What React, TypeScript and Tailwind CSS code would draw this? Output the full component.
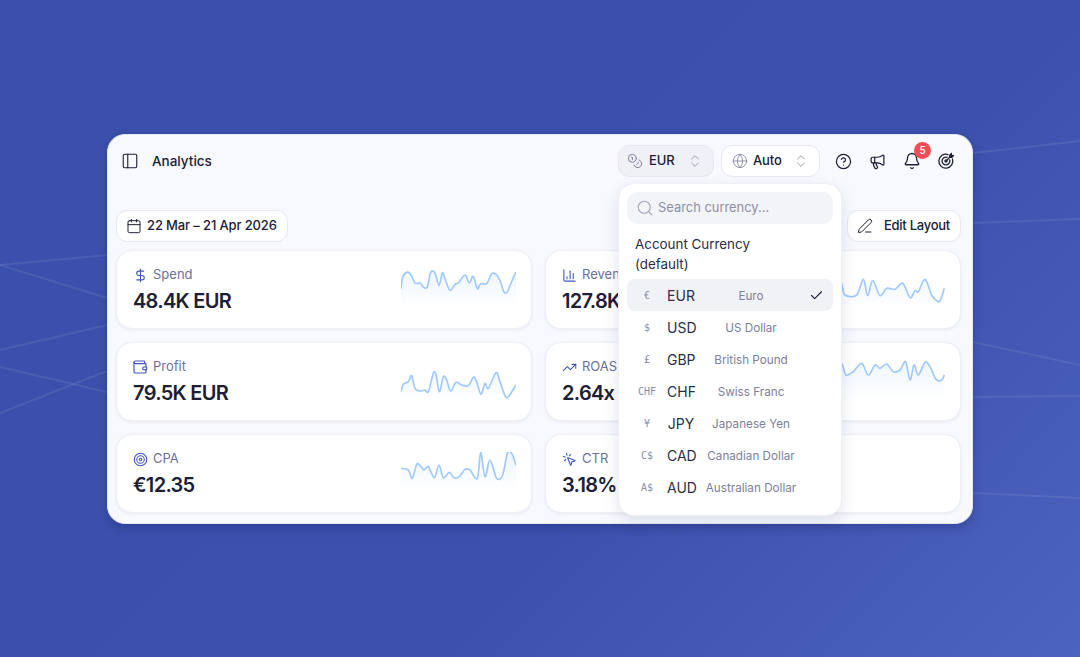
import { Calendar, Check, ChevronsUpDown, CircleHelp, DollarSign, Bell, Coins, Globe, Megaphone, MousePointerClick, PanelLeft, PenLine, Search, Target, TrendingUp, Wallet, BarChart3 } from "lucide-react";
import type { ReactNode } from "react";

type Pt = [number, number];

// smooth line through the points (catmull-rom to bezier)
function smooth(pts: Pt[]) {
  let d = `M${pts[0][0]} ${pts[0][1]}`;
  for (let i = 0; i < pts.length - 1; i++) {
    const p0 = pts[Math.max(i - 1, 0)];
    const p1 = pts[i];
    const p2 = pts[i + 1];
    const p3 = pts[Math.min(i + 2, pts.length - 1)];
    const c1x = p1[0] + (p2[0] - p0[0]) / 6;
    const c1y = p1[1] + (p2[1] - p0[1]) / 6;
    const c2x = p2[0] - (p3[0] - p1[0]) / 6;
    const c2y = p2[1] - (p3[1] - p1[1]) / 6;
    d += ` C${c1x.toFixed(1)} ${c1y.toFixed(1)} ${c2x.toFixed(1)} ${c2y.toFixed(1)} ${p2[0]} ${p2[1]}`;
  }
  return d;
}

const shift = (pts: Pt[], dy: number): Pt[] => pts.map(([x, y]) => [x, y + dy]);

// all points are in 3x zoom coordinates, relative to the top left of the chart
const spend: Pt[] = shift([[0,50],[5,15],[17,1],[29,7],[42,33],[57,33],[67,45],[79,45],[89,1],[102,3],[114,40],[124,3],[132,20],[147,55],[162,37],[172,33],[187,13],[195,11],[205,33],[217,13],[229,50],[239,35],[257,35],[272,5],[285,7],[297,25],[309,60],[319,60],[329,35],[345,0]], 12);
const revenue: Pt[] = [[0,40],[20,30],[35,46],[45,81],[80,81],[100,34],[113,83],[128,38],[150,83],[170,61],[195,64],[218,46],[240,89],[255,68],[265,71],[285,34],[305,81],[320,98],[330,98],[343,61]];
const profit: Pt[] = shift([[0,57],[7,35],[22,27],[32,9],[42,47],[57,55],[72,52],[82,57],[97,2],[105,5],[115,57],[127,12],[137,22],[149,55],[165,29],[182,37],[202,39],[217,14],[227,27],[240,65],[252,32],[262,47],[285,0],[297,27],[312,69],[322,72],[345,37]], 38);
const roas: Pt[] = [[0,40],[20,25],[35,10],[48,45],[70,35],[95,10],[115,45],[135,15],[150,25],[170,12],[190,35],[210,30],[227,5],[240,60],[252,15],[265,45],[285,7],[300,20],[318,58],[335,60],[343,45]];
const cpa: Pt[] = shift([[0,47],[22,52],[34,77],[47,35],[57,39],[69,52],[82,42],[100,75],[114,37],[127,75],[145,59],[159,75],[175,72],[192,50],[207,52],[229,77],[239,0],[252,72],[267,22],[287,77],[305,67],[319,2],[332,2],[345,37]], 2);

function Sparkline({ id, pts }: { id: string; pts: Pt[] }) {
  const line = smooth(pts);
  return (
    <svg width="115" height="40" viewBox="0 0 345 120" fill="none" className="shrink-0">
      <defs>
        <linearGradient id={id} x1="0" y1="0" x2="0" y2="1">
          <stop offset="0" stopColor="#93c5fd" stopOpacity="0.16" />
          <stop offset="1" stopColor="#93c5fd" stopOpacity="0" />
        </linearGradient>
      </defs>
      <path d={`${line} L345 120 L0 120 Z`} fill={`url(#${id})`} />
      <path d={line} stroke="#a0c9fd" strokeWidth="5" />
    </svg>
  );
}

function StatCard({ icon, label, value, children }: { icon: ReactNode; label: string; value: string; children?: ReactNode }) {
  return (
    <div className="h-[79px] flex items-start justify-between rounded-[16px] bg-white border border-[#eef0f6] shadow-[0_1px_3px_rgba(30,41,90,0.08)] pl-4 pr-[15px] pt-[14px]">
      <div>
        <div className="flex items-center gap-[5px] -ml-[1px] h-[20px] text-[13px] text-[#6b7194]">
          <span className="w-[16px] flex items-center justify-center text-[#4058b8]">{icon}</span>
          {label}
        </div>
        <div className="mt-[2px] text-[20px] leading-[28px] font-semibold tracking-[-0.035em] text-[#1d2035]">{value}</div>
      </div>
      <div className="pt-[3px]">{children}</div>
    </div>
  );
}

const currencies = [
  ["€", "EUR", "Euro"],
  ["$", "USD", "US Dollar"],
  ["£", "GBP", "British Pound"],
  ["CHF", "CHF", "Swiss Franc"],
  ["¥", "JPY", "Japanese Yen"],
  ["C$", "CAD", "Canadian Dollar"],
  ["A$", "AUD", "Australian Dollar"],
];

function CurrencyMenu() {
  return (
    <div className="absolute left-[510px] top-[48px] w-[224px] h-[333px] rounded-[16px] bg-white border border-[#eef0f6] shadow-[0_6px_16px_rgba(30,41,90,0.12)] p-2">
      <div className="flex items-center gap-[4px] h-[32px] rounded-[10px] bg-[#f3f4f8] pl-[9px] text-[12.9px] text-[#8d90a6]">
        <Search className="w-[18px] h-[18px] text-[#a5a8b8]" strokeWidth={1.5} />
        Search currency...
      </div>
      <div className="px-2 pt-[10px] pb-[5px] text-[13.4px] leading-[20px] text-[#2b2e45]">
        Account Currency
        <br />
        (default)
      </div>
      {currencies.map(([sym, code, name], i) => (
        <div key={code} className={`flex items-center h-[32px] rounded-[8px] ${i === 0 ? "bg-[#f1f2f6]" : ""}`}>
          <span className="w-[40px] text-center text-[10px] text-[#8a8da6] font-medium" style={{ fontFamily: "'DejaVu Sans Mono', monospace" }}>{sym}</span>
          <span className="w-[28px] text-center text-[14px] text-[#2b2e45]">{code}</span>
          <span className="w-[112px] pt-[4px] text-center text-[11.7px] text-[#7d8099]">{name}</span>
          {i === 0 && <Check className="ml-[2px] w-[15px] h-[15px] text-[#1d2035]" strokeWidth={1.75} />}
        </div>
      ))}
    </div>
  );
}

// target with an arrow going out at the top right
function TargetArrow() {
  return (
    <svg width="18" height="18" viewBox="0 0 24 24" fill="none" stroke="#1d2035" strokeWidth="1.75" strokeLinecap="round" strokeLinejoin="round" className="ml-[16px]">
      <path d="M20.6 9.3a9.3 9.3 0 1 1-5.9-5.9" />
      <path d="M16.9 10.6a5.2 5.2 0 1 1-3.5-3.5" />
      <circle cx="12" cy="12" r="1.4" />
      <path d="M12 12l6-6" />
      <path d="M17 4.2V7h2.8l2.2-2.2h-2.8V2z" fill="#1d2035" />
    </svg>
  );
}

export default function App() {
  return (
    <div className="relative w-[1080px] h-[657px] overflow-hidden bg-[linear-gradient(135deg,#3b50ac_0%,#3c51ad_62%,#4d63c0_100%)] flex items-start justify-center pt-[134px]" style={{ fontFamily: "Inter, sans-serif" }}>
      {/* faint lines behind the window */}
      <svg className="absolute inset-0" width="1080" height="657" fill="none" stroke="#ffffff" strokeOpacity="0.08" strokeWidth="2">
        <path d="M0 265 L107 255" />
        <path d="M0 265 L107 298" />
        <path d="M0 350 L107 325" />
        <path d="M0 367 L107 392" />
        <path d="M0 413 L107 371" />
        <path d="M973 153 L1080 141" />
        <path d="M973 223 L1080 219" />
        <path d="M973 342 L1080 365" />
        <path d="M973 397 L1080 396" />
        <path d="M973 493 L1080 498" />
      </svg>

      <div className="relative w-[866px] h-[390px] rounded-[18px] bg-[#f8f9fe] border border-[#e4e6f0] shadow-[0_4px_10px_rgba(20,30,90,0.3)] pl-2 pr-[11px]">
        <header className="flex items-center h-[52px] pl-[5px] pr-[6px]">
          <PanelLeft className="w-[18px] h-[18px] text-[#1d2035]" strokeWidth={1.5} />
          <span className="ml-[13px] text-[13.5px] font-medium text-[#1d2035]">Analytics</span>
          <div className="ml-auto flex items-center">
            <button className="flex items-center w-[96px] h-[32px] rounded-[11px] bg-[#f0f1f6] border border-[#e7e9f1] pl-[8px] pr-[10px] text-[13px] tracking-[-0.01em] font-medium text-[#1d2035]">
              <Coins className="w-[16px] h-[16px] text-[#7d8099]" strokeWidth={1.5} />
              <span className="ml-[6px]">EUR</span>
              <ChevronsUpDown className="ml-auto w-[16px] h-[16px] text-[#8f92a8]" strokeWidth={1.35} />
            </button>
            <button className="ml-[7px] flex items-center w-[99px] h-[32px] rounded-[11px] bg-white border border-[#e7e9f1] pl-[10px] pr-[10px] text-[13px] tracking-[-0.01em] font-medium text-[#1d2035]">
              <Globe className="w-[16px] h-[16px] text-[#7d8099]" strokeWidth={1.25} />
              <span className="ml-[5px]">Auto</span>
              <ChevronsUpDown className="ml-auto w-[16px] h-[16px] text-[#8f92a8]" strokeWidth={1.35} />
            </button>
            <CircleHelp className="ml-[15px] w-[17px] h-[17px] text-[#1d2035]" strokeWidth={1.75} />
            <Megaphone className="ml-[17px] w-[17px] h-[17px] text-[#1d2035]" strokeWidth={1.75} />
            <div className="relative ml-[17px]">
              <Bell className="w-[18px] h-[18px] text-[#1d2035]" strokeWidth={1.75} />
              <span className="absolute -top-[10px] left-[11px] w-[17px] h-[17px] rounded-full bg-[#f24d57] text-white text-[10px] font-medium flex items-center justify-center">5</span>
            </div>
            <TargetArrow />
          </div>
        </header>

        <div className="flex justify-between mt-[23px]">
          <button className="flex items-center gap-[5px] h-[32px] rounded-[11px] bg-white border border-[#e7e9f1] pl-[9px] pr-[10px] text-[13px] tracking-[-0.01em] font-medium text-[#1d2035]">
            <Calendar className="w-[16px] h-[16px]" strokeWidth={1.5} />
            22 Mar – 21 Apr 2026
          </button>
          <button className="flex items-center gap-[11px] h-[32px] rounded-[11px] bg-white border border-[#e7e9f1] pl-[9px] pr-[10px] text-[13px] tracking-[-0.02em] font-medium text-[#1d2035]">
            <PenLine className="w-[16px] h-[16px]" strokeWidth={1.5} />
            Edit Layout
          </button>
        </div>

        <div className="grid grid-cols-2 gap-x-[13px] gap-y-[13px] mt-[8px]">
          <StatCard icon={<DollarSign className="w-[15px] h-[15px]" strokeWidth={1.75} />} label="Spend" value="48.4K EUR">
            <Sparkline id="s1" pts={spend} />
          </StatCard>
          <StatCard icon={<BarChart3 className="w-[15px] h-[15px]" strokeWidth={1.75} />} label="Revenue" value="127.8K EUR">
            <Sparkline id="s2" pts={revenue} />
          </StatCard>
          <StatCard icon={<Wallet className="w-[16px] h-[16px]" strokeWidth={1.75} />} label="Profit" value="79.5K EUR">
            <Sparkline id="s3" pts={profit} />
          </StatCard>
          <StatCard icon={<TrendingUp className="w-[15px] h-[15px]" strokeWidth={1.75} />} label="ROAS" value="2.64x">
            <Sparkline id="s4" pts={roas} />
          </StatCard>
          <StatCard icon={<Target className="w-[15px] h-[15px]" strokeWidth={1.75} />} label="CPA" value="€12.35">
            <Sparkline id="s5" pts={cpa} />
          </StatCard>
          <StatCard icon={<MousePointerClick className="w-[15px] h-[15px]" strokeWidth={1.75} />} label="CTR" value="3.18%" />
        </div>

        <CurrencyMenu />
      </div>
    </div>
  );
}
